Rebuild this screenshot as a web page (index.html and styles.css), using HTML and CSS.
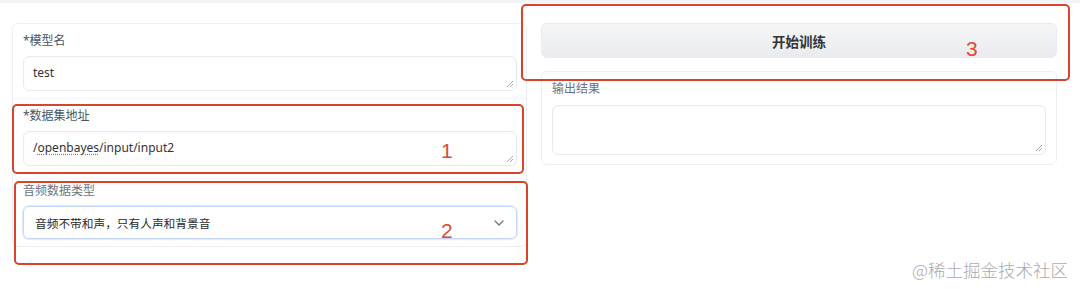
FILE: index.html
```html
<!DOCTYPE html>
<html lang="zh">
<head>
<meta charset="utf-8">
<title>训练</title>
<link rel="stylesheet" href="styles.css">
</head>
<body>
<div class="topline"></div>
<div class="app">
  <div class="col-left">
    <div class="form">
      <div class="block">
        <div class="label">*模型名</div>
        <div class="textarea"><span>test</span><svg class="grip" width="8" height="8" viewBox="0 0 8 8"><path d="M7 1 L1 7 M7 4 L4 7" stroke="#9ca3af" stroke-width="0.9" fill="none"/></svg></div>
      </div>
      <div class="block">
        <div class="label">*数据集地址</div>
        <div class="textarea"><span>/<span class="spell">openbayes</span>/input/input2</span><svg class="grip" width="8" height="8" viewBox="0 0 8 8"><path d="M7 1 L1 7 M7 4 L4 7" stroke="#9ca3af" stroke-width="0.9" fill="none"/></svg></div>
      </div>
      <div class="block">
        <div class="label light">音频数据类型</div>
        <div class="select"><span>音频不带和声，只有人声和背景音</span><svg class="chev" width="10" height="6" viewBox="0 0 10 6"><path d="M1 1 L5 5 L9 1" stroke="#6b7280" stroke-width="1.2" fill="none" stroke-linecap="round" stroke-linejoin="round"/></svg></div>
      </div>
    </div>
  </div>
  <div class="col-right">
    <button class="btn">开始训练</button>
    <div class="out">
      <div class="label light">输出结果</div>
      <div class="textarea tall"><svg class="grip" width="8" height="8" viewBox="0 0 8 8"><path d="M7 1 L1 7 M7 4 L4 7" stroke="#9ca3af" stroke-width="0.9" fill="none"/></svg></div>
    </div>
  </div>
</div>

<div class="mark box1"></div>
<div class="mark box2"></div>
<div class="mark box3"></div>
<div class="num n1">1</div>
<div class="num n2">2</div>
<div class="num n3">3</div>
<div class="watermark">@稀土掘金技术社区</div>
</body>
</html>
```

FILE: styles.css
```css
html, body {
  margin: 0;
  padding: 0;
  background: #ffffff;
  width: 1080px;
  height: 289px;
  overflow: hidden;
  font-family: "Noto Sans", "Noto Sans CJK SC", sans-serif;
  color: #333;
}
body { position: relative; }

.topline {
  height: 3px;
  background: #f3f4f6;
}

.app {
  display: flex;
  padding: 20px 0 0 12px;
  gap: 14px;
}

.col-left { width: 515px; }
.col-right {
  width: 516px;
  display: flex;
  flex-direction: column;
  gap: 13px;
}

.form {
  border: 1px solid #eceef1;
  border-radius: 6px;
  background: #f3f4f6;
  display: flex;
  flex-direction: column;
  gap: 1px;
  overflow: hidden;
}

.block {
  background: #fff;
  padding: 9px 9px 7px 10px;
}

.label {
  font-size: 12px;
  line-height: 16px;
  color: #4b5563;
  margin-bottom: 7px;
}
.label.light { color: #6b7280; }

.textarea {
  position: relative;
  height: 35px;
  box-sizing: border-box;
  border: 1px solid #e8eaee;
  border-radius: 6px;
  background: #fff;
  box-shadow: inset 0 1px 2px rgba(0,0,0,0.03);
  padding: 8px 9px;
  font-size: 12px;
  line-height: 16px;
  color: #333;
}
.textarea.tall { height: 50px; }

.grip {
  position: absolute;
  right: 2px;
  bottom: 2px;
}

.spell {
  text-decoration: underline dotted #e0533d;
  text-underline-offset: 2px;
}

.select {
  height: 33px;
  box-sizing: border-box;
  border: 1px solid #c5d6fb;
  border-radius: 6px;
  box-shadow: 0 0 0 1px #e2ebfe, 0 1px 2px rgba(0,0,0,0.04);
  margin-top: 2px;
  padding: 0 11px;
  display: flex;
  align-items: center;
  justify-content: space-between;
  font-size: 11.7px;
  color: #2b2b2b;
}
.chev { margin-right: 1px; }

.btn {
  height: 35px;
  border: 1px solid #e9ebee;
  border-radius: 6px;
  background: linear-gradient(180deg, #f5f6f7 0%, #e9ebee 100%);
  font-family: "Noto Sans CJK SC", sans-serif;
  font-size: 13.5px;
  font-weight: 700;
  color: #333;
  padding: 0;
}

.out {
  border: 1px solid #eceef1;
  border-radius: 6px;
  padding: 9px 10px 9px 10px;
  height: 94px;
  box-sizing: border-box;
}
.out .label { margin-bottom: 8px; }

.mark {
  position: absolute;
  border: 2px solid #d9432c;
  border-radius: 5px;
  box-sizing: border-box;
}
.box1 { left: 12px; top: 104px; width: 512px; height: 70px; }
.box2 { left: 14px; top: 181px; width: 514px; height: 84px; }
.box3 { left: 521px; top: 4px; width: 549px; height: 77px; }

.num {
  position: absolute;
  font-family: "Liberation Sans", sans-serif;
  font-size: 21px;
  line-height: 21px;
  color: #e04a33;
  font-weight: 400;
}
.n1 { left: 441px; top: 140px; }
.n2 { left: 441px; top: 220px; }
.n3 { left: 966px; top: 38px; }

.watermark {
  position: absolute;
  left: 912px;
  top: 260px;
  font-family: "Noto Sans CJK SC", sans-serif;
  font-size: 17.5px;
  line-height: 20px;
  font-weight: 300;
  color: #ababab;
  white-space: nowrap;
}
```
